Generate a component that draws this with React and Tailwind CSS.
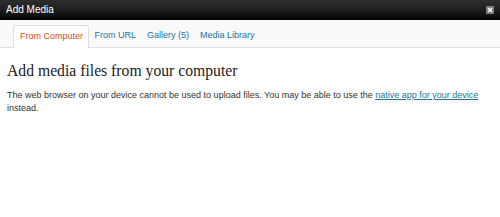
export default function App() {
  return (
    <div className="w-[500px] h-[217px] bg-white overflow-hidden" style={{ fontFamily: '"Liberation Sans", Arial, sans-serif' }}>
      <div className="h-[20px] flex items-center justify-between pl-[6px] pr-[6px] bg-gradient-to-b from-[#2e2e2e] via-[#1f1f1f] to-[#050505]">
        <span className="text-white text-[10px] leading-none">Add Media</span>
        <span className="w-[8px] h-[8px] bg-[#7a7a7a] flex items-center justify-center">
          <svg width="6" height="6" viewBox="0 0 6 6"><path d="M1 1L5 5M5 1L1 5" stroke="#fff" strokeWidth="1.4" /></svg>
        </span>
      </div>
      <div className="h-[28px] bg-[#f9f9f9] border-b border-[#dfdfdf] flex items-end pl-[13px] text-[9px]">
        <div className="h-[23px] pl-[6px] pr-[5px] bg-white border border-b-0 border-[#dfdfdf] rounded-t-[3px] flex items-center text-[#d54e21] -mb-px">From Computer</div>
        <div className="h-[22px] px-[5.5px] flex items-center text-[#21759b]">From URL</div>
        <div className="h-[22px] px-[5.5px] flex items-center text-[#21759b]">Gallery (5)</div>
        <div className="h-[22px] px-[5.5px] flex items-center text-[#21759b]">Media Library</div>
      </div>
      <div className="px-[7px]">
        <h3 className="mt-[13px] text-[15.7px] leading-[20px] text-[#222]" style={{ fontFamily: '"Liberation Serif", Georgia, serif' }}>Add media files from your computer</h3>
        <p className="mt-[8px] text-[9px] leading-[13px] text-[#333]">
          The web browser on your device cannot be used to upload files. You may be able to use the{' '}
          <a className="text-[#21759b] underline">native app for your device</a> instead.
        </p>
      </div>
    </div>
  );
}
